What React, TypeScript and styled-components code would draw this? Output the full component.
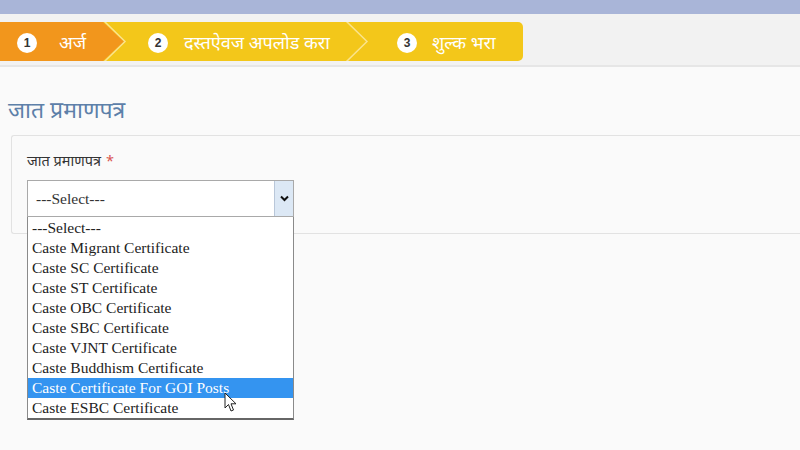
import styled, { createGlobalStyle } from "styled-components";

const GlobalStyle = createGlobalStyle`
  html, body {
    margin: 0;
    padding: 0;
    background: #fafafa;
    font-family: "Noto Sans", "Liberation Sans", sans-serif;
    overflow: hidden;
  }
`;

const Page = styled.div`
  width: 800px;
  height: 450px;
  position: relative;
`;

const TopStrip = styled.div`
  height: 14px;
  background: #a9b5d8;
`;

const StepsBand = styled.div`
  height: 53px;
  padding-top: 8px;
  box-sizing: border-box;
  background: #f2f2f2;
  border-bottom: 2px solid #e6e6e6;
`;

const StepBar = styled.div`
  display: flex;
  width: 523px;
  height: 39px;
  background: #f3c71a;
  border-radius: 0 5px 5px 0;
`;

const Step = styled.div<{ $tone: "done" | "todo"; $width: number; $pad: number; $gap: number }>`
  display: flex;
  align-items: center;
  gap: ${(p) => p.$gap}px;
  width: ${(p) => p.$width}px;
  padding-left: ${(p) => p.$pad}px;
  box-sizing: border-box;
  flex-shrink: 0;
  background: ${(p) => (p.$tone === "done" ? "#f2961c" : "transparent")};
`;

const Circle = styled.span`
  display: flex;
  align-items: center;
  justify-content: center;
  width: 20px;
  height: 20px;
  border-radius: 50%;
  background: #fff;
  color: #333;
  font-family: "Liberation Sans", sans-serif;
  font-weight: 700;
  font-size: 12px;
  flex-shrink: 0;
  margin-top: 2px;
`;

const StepLabel = styled.span`
  color: #fff;
  font-size: 18px;
  white-space: nowrap;
`;

const Chevron = styled.svg`
  width: 24px;
  height: 39px;
  flex-shrink: 0;
  display: block;
`;

const Content = styled.div`
  padding: 26px 0 0 8px;
`;

const Heading = styled.h2`
  margin: 0;
  font-weight: 400;
  font-size: 23px;
  color: #5d80a9;
  line-height: 32px;
`;

const Panel = styled.div`
  margin-top: 10px;
  margin-left: 3px;
  height: 99px;
  border: 1px solid #e2e2e2;
  border-right: none;
  border-radius: 3px 0 0 3px;
  background: #fafafa;
  padding: 14px 0 0 15px;
  box-sizing: border-box;
  position: relative;
`;

const Label = styled.div`
  font-size: 14.5px;
  color: #333;
  line-height: 21px;
  margin-bottom: 9px;
`;

const Required = styled.span`
  color: #d9534f;
  margin-left: 5px;
`;

const SelectWrap = styled.div`
  position: relative;
  width: 267px;
`;

const SelectBox = styled.div`
  display: flex;
  align-items: stretch;
  height: 37px;
  border: 1px solid #a9a9a9;
  background: #fff;
  box-sizing: border-box;
`;

const SelectValue = styled.div`
  flex: 1;
  display: flex;
  align-items: center;
  padding-left: 8px;
  font-family: "Liberation Serif", serif;
  font-size: 15.5px;
  color: #333;
`;

const ArrowButton = styled.div`
  width: 18px;
  display: flex;
  align-items: center;
  justify-content: center;
  background: #dce8f5;
  border-left: 1px solid #b9c7d9;
`;

const OptionList = styled.ul`
  position: absolute;
  top: 37px;
  left: 0;
  width: 267px;
  margin: 0;
  padding: 1px 0 0;
  list-style: none;
  background: #fff;
  border: 1px solid #8a8a8a;
  border-top: none;
  border-bottom: 2px solid #666;
  box-sizing: border-box;
  z-index: 5;
`;

const Option = styled.li<{ $active?: boolean }>`
  height: 20px;
  line-height: 20px;
  padding-left: 4px;
  font-family: "Liberation Serif", serif;
  font-size: 15.5px;
  color: ${(p) => (p.$active ? "#fff" : "#222")};
  background: ${(p) => (p.$active ? "#3494f0" : "transparent")};
  white-space: nowrap;
`;

const Cursor = styled.svg`
  position: absolute;
  left: 197px;
  top: 212px;
  width: 14px;
  height: 21px;
  z-index: 6;
`;

const options = [
  "---Select---",
  "Caste Migrant Certificate",
  "Caste SC Certificate",
  "Caste ST Certificate",
  "Caste OBC Certificate",
  "Caste SBC Certificate",
  "Caste VJNT Certificate",
  "Caste Buddhism Certificate",
  "Caste Certificate For GOI Posts",
  "Caste ESBC Certificate",
];

export default function App() {
  return (
    <Page>
      <GlobalStyle />
      <TopStrip />
      <StepsBand>
        <StepBar>
          <Step $tone="done" $width={103} $pad={17} $gap={22}>
            <Circle>1</Circle>
            <StepLabel>अर्ज</StepLabel>
          </Step>
          <Chevron viewBox="0 0 24 39">
            <polygon points="0,0 21,19.5 0,39" fill="#f2961c" />
            <polyline points="1,-1 22,19.5 1,40" fill="none" stroke="#fbe48c" strokeWidth="1.5" />
          </Chevron>
          <Step $tone="todo" $width={218} $pad={21} $gap={16}>
            <Circle>2</Circle>
            <StepLabel>दस्तऐवज अपलोड करा</StepLabel>
          </Step>
          <Chevron viewBox="0 0 24 39">
            <polyline points="1,-1 22,19.5 1,40" fill="none" stroke="#fbe48c" strokeWidth="1.5" />
          </Chevron>
          <Step $tone="todo" $width={150} $pad={28} $gap={15}>
            <Circle>3</Circle>
            <StepLabel>शुल्क भरा</StepLabel>
          </Step>
        </StepBar>
      </StepsBand>
      <Content>
        <Heading>जात प्रमाणपत्र</Heading>
        <Panel>
          <Label>
            जात प्रमाणपत्र<Required>*</Required>
          </Label>
          <SelectWrap>
            <SelectBox>
              <SelectValue>---Select---</SelectValue>
              <ArrowButton>
                <svg width="9" height="7" viewBox="0 0 9 7">
                  <polyline points="1,1.5 4.5,5 8,1.5" fill="none" stroke="#111" strokeWidth="2" />
                </svg>
              </ArrowButton>
            </SelectBox>
            <OptionList>
              {options.map((o, i) => (
                <Option key={o} $active={i === 8}>
                  {o}
                </Option>
              ))}
            </OptionList>
            <Cursor viewBox="0 0 14 21">
              <path
                d="M1 1 L1 16 L4.5 12.5 L7 19 L9.5 18 L7 11.8 L12 11.8 Z"
                fill="#fff"
                stroke="#222"
                strokeWidth="1"
                strokeLinejoin="round"
              />
            </Cursor>
          </SelectWrap>
        </Panel>
      </Content>
    </Page>
  );
}
